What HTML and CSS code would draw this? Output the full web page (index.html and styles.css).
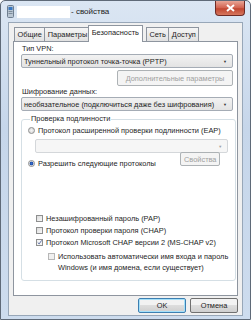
FILE: index.html
```html
<!DOCTYPE html>
<html lang="ru">
<head>
    <meta charset="UTF-8">
    <title>свойства</title>
    <link rel="stylesheet" href="styles.css">
</head>
<body>
    <div class="window">
        <div class="titlebar">
            <svg class="app-icon" width="7" height="13" viewBox="0 0 7 13">
                <rect x="0.5" y="0.5" width="6" height="12" rx="1" fill="#b9c6d3" stroke="#6f7f90"/>
                <rect x="1.5" y="2" width="4" height="3" fill="#3a78c0"/>
                <rect x="1.5" y="6" width="4" height="1" fill="#7d8c9b"/>
                <rect x="1.5" y="8" width="4" height="1" fill="#7d8c9b"/>
            </svg>
            <span class="name-box"></span>
            <span class="title">- свойства</span>
            <span class="close">
                <svg width="9" height="8" viewBox="0 0 9 8">
                    <path d="M1 1 L8 7 M8 1 L1 7" stroke="#fff" stroke-width="2"/>
                </svg>
            </span>
        </div>

        <div class="client">
            <div class="tabs">
                <span class="tab">Общие</span>
                <span class="tab">Параметры</span>
                <span class="tab active">Безопасность</span>
                <span class="tab">Сеть</span>
                <span class="tab">Доступ</span>
            </div>

            <div class="panel">
                <div class="label">Тип VPN:</div>
                <div class="combo">
                    <span>Туннельный протокол точка-точка (PPTP)</span>
                    <span class="arrow">▼</span>
                </div>
                <div class="row-right">
                    <span class="button disabled wide">Дополнительные параметры</span>
                </div>

                <div class="label second">Шифрование данных:</div>
                <div class="combo">
                    <span>необязательное (подключиться даже без шифрования)</span>
                    <span class="arrow">▼</span>
                </div>

                <fieldset class="group">
                    <legend>Проверка подлинности</legend>

                    <div class="option">
                        <span class="radio"></span>
                        <span>Протокол расширенной проверки подлинности (EAP)</span>
                    </div>
                    <div class="combo disabled inner">
                        <span></span>
                        <span class="arrow">▼</span>
                    </div>

                    <div class="option allow">
                        <span class="radio checked"></span>
                        <span>Разрешить следующие протоколы</span>
                        <span class="button disabled props">Свойства</span>
                    </div>

                    <div class="checks">
                        <div class="check-row">
                            <span class="box"></span>
                            <span>Незашифрованный пароль (PAP)</span>
                        </div>
                        <div class="check-row">
                            <span class="box"></span>
                            <span>Протокол проверки пароля (CHAP)</span>
                        </div>
                        <div class="check-row">
                            <span class="box checked">
                                <svg width="7" height="7" viewBox="0 0 7 7"><path d="M1 3.5 L3 5.5 L6.5 0.5" fill="none" stroke="#4a5f97" stroke-width="1.2"/></svg>
                            </span>
                            <span>Протокол Microsoft CHAP версии 2 (MS-CHAP v2)</span>
                        </div>
                        <div class="check-row sub">
                            <span class="box disabled"></span>
                            <span class="nowrap">Использовать автоматически имя входа и пароль<br>Windows (и имя домена, если существует)</span>
                        </div>
                    </div>
                </fieldset>
            </div>

            <div class="actions">
                <span class="button default">OK</span>
                <span class="button">Отмена</span>
            </div>
        </div>
    </div>
</body>
</html>
```

FILE: styles.css
```css
body {
    margin: 0;
    font-family: "Liberation Sans", Arial, sans-serif;
    font-size: 7.4px;
    color: #1e1e1e;
    background: #fff;
}
.window {
    width: 251px;
    height: 320px;
    box-sizing: border-box;
    border: 1px solid #5f6a78;
    border-radius: 5px 5px 0 0;
    background: linear-gradient(to bottom, #dbe6f3, #c6d6ea 40%, #cddcee);
    display: flex;
    flex-direction: column;
}
.titlebar {
    height: 21px;
    display: flex;
    align-items: center;
    position: relative;
    padding-left: 6px;
}
.app-icon {
    margin-right: 3px;
}
.name-box {
    width: 53px;
    height: 12px;
    background: #fff;
}
.title {
    margin-left: 1px;
    font-size: 8px;
    color: #222;
}
.close {
    position: absolute;
    right: 5px;
    top: 0;
    width: 30px;
    height: 15px;
    border: 1px solid #6e2b25;
    border-top: none;
    border-radius: 0 0 4px 4px;
    background: linear-gradient(to bottom, #e8a596, #d2614e 50%, #c04630 55%, #d6775e);
    display: flex;
    align-items: center;
    justify-content: center;
    box-sizing: border-box;
}
.client {
    flex: 1;
    margin: 0 7px 3px 7px;
    border: 1px solid #98a7b8;
    background: #f0f0f0;
    display: flex;
    flex-direction: column;
    padding: 0 4px 0 4px;
}
.tabs {
    display: flex;
    padding: 4px 0 0 1px;
    height: 14px;
    align-items: flex-end;
    position: relative;
    z-index: 1;
}
.tab {
    height: 13px;
    padding: 0 2.5px;
    line-height: 13px;
    border: 1px solid #8e959f;
    border-bottom: none;
    background: linear-gradient(to bottom, #f5f5f5, #e1e1e1);
    margin-right: -1px;
    color: #222;
}
.tab.active {
    height: 16px;
    line-height: 14px;
    padding: 0 3px;
    margin: 0 1px 0 -2px;
    background: #fff;
    position: relative;
    top: 1px;
    z-index: 2;
}
.tab.active + .tab {
    margin-left: 2px;
}
.panel {
    height: 251px;
    border: 1px solid #8e959f;
    background: #fff;
    padding: 2px 4px 0 7px;
    display: flex;
    flex-direction: column;
}
.label {
    height: 10px;
    line-height: 10px;
    padding-left: 1px;
}
.label.second {
    margin-top: 1px;
}
.combo {
    height: 12px;
    border: 1px solid #a5acb5;
    border-radius: 2px;
    background: linear-gradient(to bottom, #f2f2f2, #e3e3e3);
    display: flex;
    justify-content: space-between;
    align-items: center;
    padding: 0 5px 0 2px;
}
.arrow {
    font-size: 4px;
    color: #333;
}
.row-right {
    display: flex;
    justify-content: flex-end;
    margin-top: 2px;
}
.button {
    height: 14px;
    border: 1px solid #707070;
    border-radius: 2px;
    background: linear-gradient(to bottom, #f2f2f2 45%, #dddddd 50%, #cfcfcf);
    display: flex;
    align-items: center;
    justify-content: center;
    box-sizing: border-box;
}
.button.disabled {
    border-color: #adb2b5;
    background: #f4f4f4;
    color: #a0a0a0;
}
.button.wide {
    width: 116px;
    height: 16px;
}
.group {
    margin: 4px 0 0 0;
    padding: 0 7px 0 6px;
    border: 1px solid #d5dfe5;
    border-radius: 3px;
    height: 166px;
    box-sizing: border-box;
}
.group legend {
    padding: 0 1px;
    margin-left: 2px;
    line-height: 8px;
}
.option {
    display: flex;
    align-items: center;
    height: 10px;
    margin-top: 2px;
}
.radio {
    width: 7px;
    height: 7px;
    box-sizing: border-box;
    border: 1px solid #8e8f8f;
    border-radius: 50%;
    background: radial-gradient(circle, #f5f5f5, #d0d0d0);
    margin-right: 3px;
}
.radio.checked {
    background: radial-gradient(circle, #3a6fcf 0, #1e4fa8 1.6px, #eaeaea 2.2px, #d3d3d3);
}
.combo.inner {
    margin: 4px 0 0 7px;
    height: 12px;
    border-color: #d4d7da;
    background: #f6f6f6;
}
.combo.inner .arrow {
    color: #a0a0a0;
}
.option.allow {
    margin-top: 0;
    height: 20px;
    position: relative;
}
.button.props {
    position: absolute;
    right: 8px;
    top: -1px;
    width: 40px;
    height: 14px;
}
.checks {
    margin-top: 41px;
    padding-left: 8px;
    display: flex;
    flex-direction: column;
    gap: 2px;
}
.check-row {
    display: flex;
    align-items: flex-start;
    line-height: 10px;
}
.check-row .box {
    flex: none;
    width: 7px;
    height: 7px;
    border: 1px solid #8e8f8f;
    background: linear-gradient(135deg, #dcdcdc, #f8f8f8);
    margin: 1px 3px 0 0;
    box-sizing: border-box;
    display: flex;
    align-items: center;
    justify-content: center;
}
.check-row .box.checked {
    background: #f4f4f4;
}
.check-row .box svg {
    margin-top: -1px;
}
.check-row.sub {
    padding-left: 12px;
    line-height: 11px;
    margin-top: 1px;
}
.check-row.sub .box {
    margin-top: 2px;
    border-color: #b7b7b7;
    background: #f0f0f0;
}
.nowrap {
    white-space: nowrap;
}
.actions {
    flex: 1;
    display: flex;
    justify-content: flex-end;
    align-items: center;
    gap: 4px;
}
.actions .button {
    width: 48px;
    height: 15px;
}
.button.default {
    border-color: #3c7fb1;
    box-shadow: inset 0 0 0 1px #a6e0f9;
}
```
